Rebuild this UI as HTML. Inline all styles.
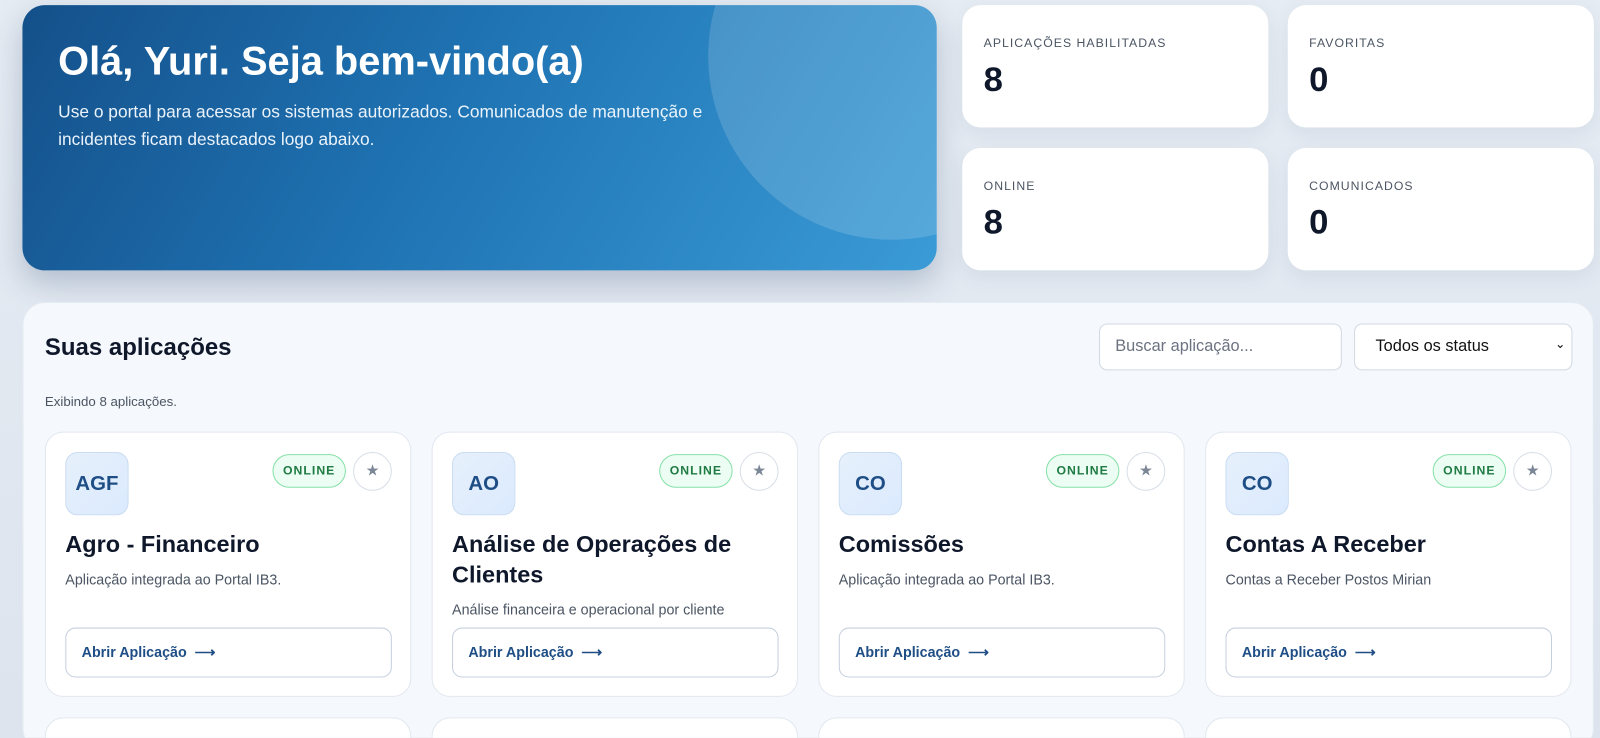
<!DOCTYPE html><html style="width:1600px;height:738px;overflow:hidden"><head><meta charset="utf-8"><style>
*{box-sizing:border-box;margin:0;padding:0}
html,body{width:1600px;height:738px;overflow:hidden}
body{background:linear-gradient(180deg,#e6ecf3,#dde4ee);font-family:"Liberation Sans",sans-serif;position:relative;color:#0f172a}
.w{position:absolute;left:0;top:0;width:1568px;height:723px;transform:scale(1.0204);transform-origin:0 0;overflow:hidden}
.hero{position:absolute;left:22px;top:5px;width:896px;height:260px;border-radius:22px;overflow:hidden;background:linear-gradient(120deg,#14508a 0%,#1f73b3 45%,#3a9bd6 100%);box-shadow:0 12px 30px rgba(30,60,100,.25)}
.hero .c{position:absolute;left:672px;top:-130px;width:360px;height:360px;border-radius:50%;background:rgba(255,255,255,.15)}
.hero h1{position:absolute;left:35px;top:34px;color:#fff;font-size:39px;font-weight:bold}
.hero p{position:absolute;left:35px;top:91px;width:700px;color:#eaf3fb;font-size:17px;line-height:27px}
.st{position:absolute;width:300px;height:120px;background:#fff;border-radius:18px;box-shadow:0 6px 20px rgba(30,60,100,.08)}
.st .l{position:absolute;left:21px;top:30px;font-size:12px;letter-spacing:1px;color:#4b5563}
.st .v{position:absolute;left:21px;top:54px;font-size:34px;font-weight:bold;color:#0f172a}
.panel{position:absolute;left:22px;top:296px;width:1540px;height:440px;background:#f5f8fc;border-radius:22px;border:1px solid #e5ebf2;overflow:hidden}
.panel h2{position:absolute;left:21px;top:30px;font-size:23.5px;font-weight:bold}
.panel .sub{position:absolute;left:21px;top:89px;font-size:13px;color:#4b5563}
.in{position:absolute;top:20px;height:46px;background:#fff;border:1px solid #d1d9e3;border-radius:8px;font-size:16px;padding:13px 15px}
.card{position:absolute;top:126px;width:359px;height:260px;background:#fff;border:1px solid #e2e8f0;border-radius:18px}
.ic{position:absolute;left:19px;top:19px;width:62px;height:62px;border-radius:12px;background:linear-gradient(135deg,#e6f0fb,#dbeafe);border:1px solid #c9dcf2;color:#1e4e85;font-weight:bold;font-size:20px;text-align:center;line-height:60px}
.bd{position:absolute;left:222px;top:21px;width:72px;height:33px;border-radius:17px;background:#ecfdf3;border:1px solid #86e0a9;color:#1f7a43;font-size:12px;font-weight:bold;letter-spacing:1px;text-align:center;line-height:31px}
.sr{position:absolute;left:301px;top:19px;width:38px;height:38px;border-radius:50%;border:1px solid #d8dee7;color:#7b8796;text-align:center;line-height:36px;font-size:15px}
.ti{position:absolute;left:19px;top:94px;width:320px;font-size:23px;font-weight:bold;line-height:30px}
.ds{position:absolute;left:19px;font-size:14px;color:#4b5563}
.bt{position:absolute;left:19px;top:191px;width:320px;height:49px;border:1px solid #c5d0dd;border-radius:10px;color:#1e4e85;font-weight:bold;font-size:14px;padding:15px 15px}
.card2{top:406px}
</style></head><body><div class="w">
<div class="hero"><div class="c"></div><h1>Olá, Yuri. Seja bem-vindo(a)</h1><p>Use o portal para acessar os sistemas autorizados. Comunicados de manutenção e incidentes ficam destacados logo abaixo.</p></div>
<div class="st" style="left:943px;top:5px"><div class="l">APLICAÇÕES HABILITADAS</div><div class="v">8</div></div>
<div class="st" style="left:1262px;top:5px"><div class="l">FAVORITAS</div><div class="v">0</div></div>
<div class="st" style="left:943px;top:145px"><div class="l">ONLINE</div><div class="v">8</div></div>
<div class="st" style="left:1262px;top:145px"><div class="l">COMUNICADOS</div><div class="v">0</div></div>
<div class="panel">
<h2>Suas aplicações</h2><div class="sub">Exibindo 8 aplicações.</div>
<div class="in" style="left:1054px;width:238px;color:#6b7280">Buscar aplicação...</div>
<div class="in" style="left:1304px;width:214px;padding-left:20px;color:#111">Todos os status<span style="position:absolute;right:6px;top:12px;font-size:12px">&#8964;</span></div>
<div class="card" style="left:21px"><div class="ic">AGF</div><div class="bd">ONLINE</div><div class="sr">★</div><div class="ti">Agro - Financeiro</div><div class="ds" style="top:136px">Aplicação integrada ao Portal IB3.</div><div class="bt">Abrir Aplicação &nbsp;⟶</div></div>
<div class="card" style="left:400px"><div class="ic">AO</div><div class="bd">ONLINE</div><div class="sr">★</div><div class="ti">Análise de Operações de Clientes</div><div class="ds" style="top:165px">Análise financeira e operacional por cliente</div><div class="bt">Abrir Aplicação &nbsp;⟶</div></div>
<div class="card" style="left:779px"><div class="ic">CO</div><div class="bd">ONLINE</div><div class="sr">★</div><div class="ti">Comissões</div><div class="ds" style="top:136px">Aplicação integrada ao Portal IB3.</div><div class="bt">Abrir Aplicação &nbsp;⟶</div></div>
<div class="card" style="left:1158px"><div class="ic">CO</div><div class="bd">ONLINE</div><div class="sr">★</div><div class="ti">Contas A Receber</div><div class="ds" style="top:136px">Contas a Receber Postos Mirian</div><div class="bt">Abrir Aplicação &nbsp;⟶</div></div>
<div class="card card2" style="left:21px"></div><div class="card card2" style="left:400px"></div><div class="card card2" style="left:779px"></div><div class="card card2" style="left:1158px"></div>
</div>
</div></body></html>
